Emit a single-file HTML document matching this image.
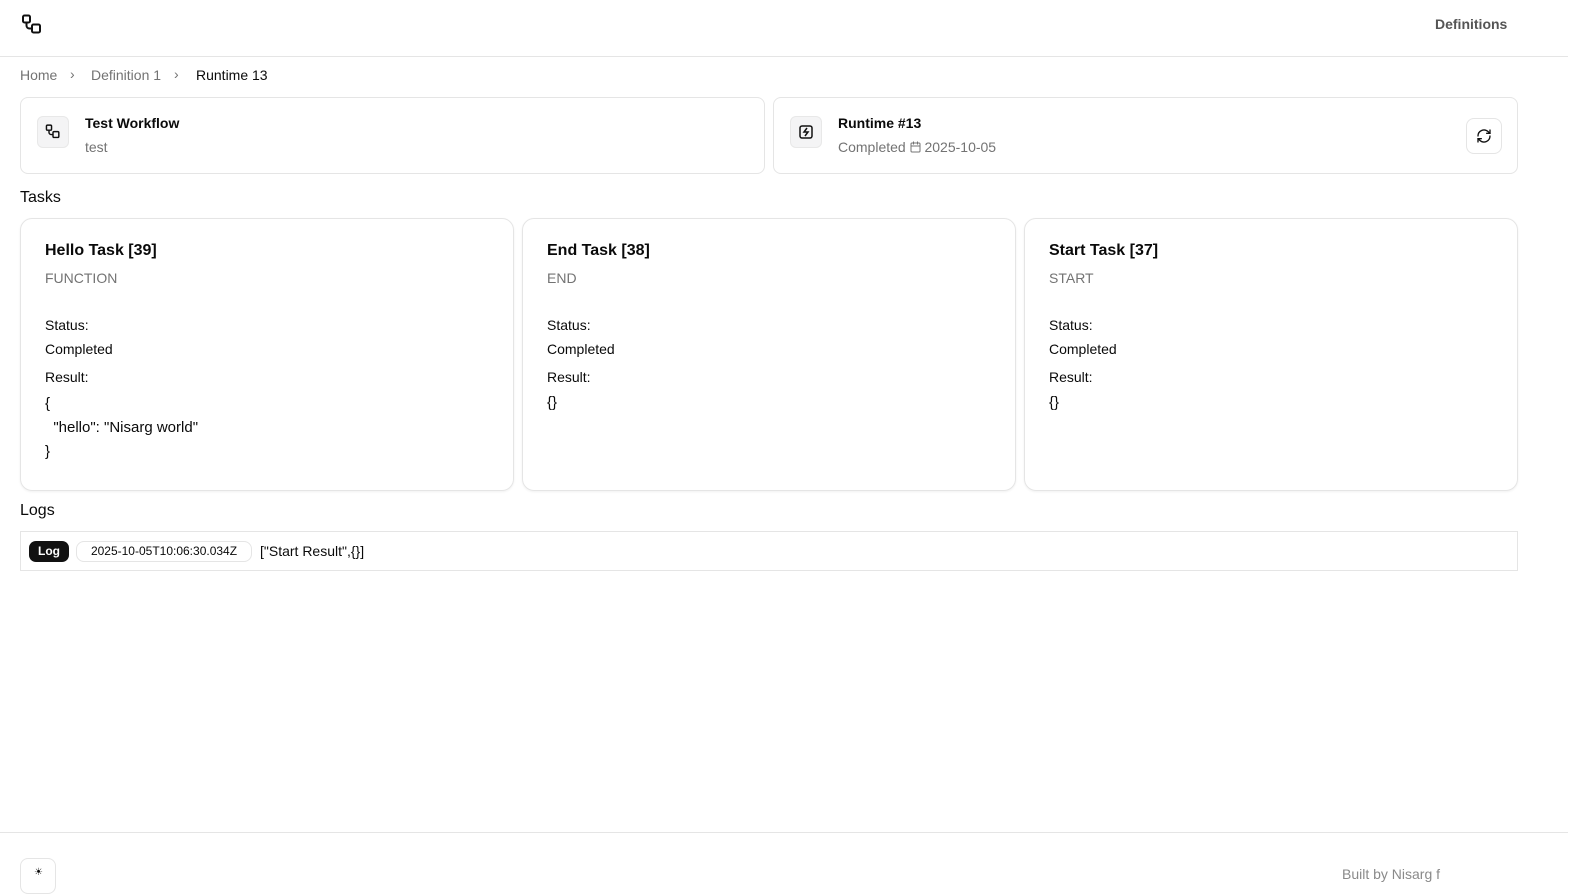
<!DOCTYPE html>
<html><head><meta charset="utf-8"><style>
*{box-sizing:border-box;margin:0;padding:0}
body{width:1574px;height:875px;overflow:hidden;background:#fff;font-family:"Liberation Sans",sans-serif;color:#0a0a0a;position:relative}
.hdr{position:absolute;left:0;top:0;width:1568px;height:57px;border-bottom:1px solid #e5e5e5}
.abs{position:absolute}
.card{position:absolute;border:1px solid #e5e5e5;border-radius:8px;background:#fff}
.ib{position:absolute;width:32px;height:32px;border:1px solid #e8e8e8;border-radius:6px;background:#f4f4f5;display:flex;align-items:center;justify-content:center}
.t{font-size:14px}
.task{position:absolute;top:218px;width:494px;height:273px;border:1px solid #e5e5e5;border-radius:12px;box-shadow:0 1px 2px rgba(0,0,0,.06)}
.task h3{position:absolute;left:24px;top:23px;font-size:16px;font-weight:bold}
.task .ty{position:absolute;left:24px;top:51px;font-size:14px;color:#737373}
.task .l{position:absolute;left:24px;font-size:14px}
</style></head><body>
<div class="hdr">
<svg class="abs" style="left:21px;top:14px" width="22" height="22" viewBox="0 0 22 22" fill="none" stroke="#111" stroke-width="2"><rect x="2" y="1.5" width="7" height="7" rx="1.5"/><rect x="11" y="10.5" width="8" height="8" rx="1.5"/><path d="M5.5 8.5v3a3 3 0 0 0 3 3H11"/></svg>
<div class="abs t" style="left:1435px;top:16px;color:#555;font-weight:bold">Definitions</div>
</div>
<div class="abs t" style="left:20px;top:67px;color:#737373">Home</div>
<div class="abs t" style="left:70px;top:66px;color:#737373">›</div>
<div class="abs t" style="left:91px;top:67px;color:#737373">Definition 1</div>
<div class="abs t" style="left:174px;top:66px;color:#737373">›</div>
<div class="abs t" style="left:196px;top:67px">Runtime 13</div>

<div class="card" style="left:20px;top:97px;width:745px;height:77px">
<div class="ib" style="left:16px;top:18px"><svg width="16" height="16" viewBox="0 0 22 22" fill="none" stroke="#111" stroke-width="2"><rect x="2" y="1.5" width="7" height="7" rx="1.5"/><rect x="11" y="10.5" width="8" height="8" rx="1.5"/><path d="M5.5 8.5v3a3 3 0 0 0 3 3H11"/></svg></div>
<div class="abs t" style="left:64px;top:17px;font-weight:bold">Test Workflow</div>
<div class="abs t" style="left:64px;top:41px;color:#737373">test</div>
</div>
<div class="card" style="left:773px;top:97px;width:745px;height:77px">
<div class="ib" style="left:16px;top:18px"><svg width="16" height="16" viewBox="0 0 16 16" fill="none" stroke="#111" stroke-width="1.5"><rect x="2" y="2" width="12" height="12" rx="2"/><path d="M9 4l-3 4h4l-3 4"/></svg></div>
<div class="abs t" style="left:64px;top:17px;font-weight:bold">Runtime #13</div>
<div class="abs t" style="left:64px;top:41px;color:#737373">Completed <svg width="11" height="12" viewBox="0 0 11 12" fill="none" stroke="#737373" stroke-width="1" style="vertical-align:-1px"><rect x="1" y="2" width="9" height="9" rx="1"/><path d="M1 5h9M3.5 0.5v3M7.5 0.5v3"/></svg> 2025-10-05</div>
<div class="abs" style="left:692px;top:20px;width:36px;height:36px;border:1px solid #e5e5e5;border-radius:8px;display:flex;align-items:center;justify-content:center"><svg width="16" height="16" viewBox="0 0 24 24" fill="none" stroke="#111" stroke-width="2" stroke-linecap="round"><path d="M3 12a9 9 0 0 1 15-6.7L21 8"/><path d="M21 3v5h-5"/><path d="M21 12a9 9 0 0 1-15 6.7L3 16"/><path d="M8 16H3v5"/></svg></div>
</div>

<div class="abs" style="left:20px;top:189px;font-size:16px">Tasks</div>
<div class="task" style="left:20px"><h3>Hello Task [39]</h3><div class="ty">FUNCTION</div>
<div class="l" style="top:98px">Status:</div><div class="l" style="top:122px">Completed</div><div class="l" style="top:150px">Result:</div>
<div class="l" style="top:173px;font-size:15px;line-height:24px;white-space:pre">{
  "hello": "Nisarg world"
}</div></div>
<div class="task" style="left:522px"><h3>End Task [38]</h3><div class="ty">END</div>
<div class="l" style="top:98px">Status:</div><div class="l" style="top:122px">Completed</div><div class="l" style="top:150px">Result:</div><div class="l" style="top:175px;font-size:15px">{}</div></div>
<div class="task" style="left:1024px"><h3>Start Task [37]</h3><div class="ty">START</div>
<div class="l" style="top:98px">Status:</div><div class="l" style="top:122px">Completed</div><div class="l" style="top:150px">Result:</div><div class="l" style="top:175px;font-size:15px">{}</div></div>

<div class="abs" style="left:20px;top:502px;font-size:16px">Logs</div>
<div class="abs" style="left:20px;top:531px;width:1498px;height:40px;border:1px solid #e5e5e5">
<div class="abs" style="left:8px;top:9px;height:21px;width:40px;background:#111;color:#fff;border-radius:7px;font-size:12px;font-weight:bold;text-align:center;line-height:21px">Log</div>
<div class="abs" style="left:55px;top:9px;height:21px;width:176px;border:1px solid #e5e5e5;border-radius:8px;font-size:12px;text-align:center;line-height:19px">2025-10-05T10:06:30.034Z</div>
<div class="abs t" style="left:239px;top:11px">["Start Result",{}]</div>
</div>

<div class="abs" style="left:0;top:832px;width:1568px;border-top:1px solid #e5e5e5"></div>
<div class="abs" style="left:20px;top:858px;width:36px;height:36px;border:1px solid #e5e5e5;border-radius:8px"><div style="position:absolute;left:13px;top:8px;font-size:10px">☀</div></div>
<div class="abs t" style="left:1342px;top:866px;color:#8a8a8a">Built by Nisarg f</div>
</body></html>
